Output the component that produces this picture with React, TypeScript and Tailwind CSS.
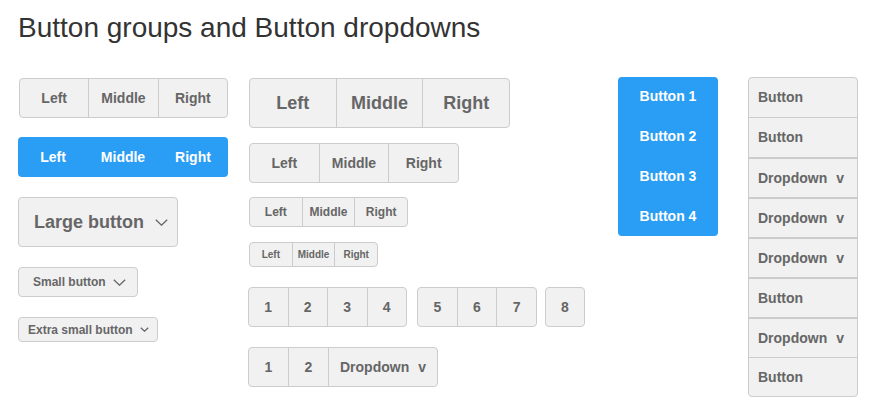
const btnBase = "flex items-center justify-center font-bold text-[#666]"

function Chevron({ w, h }: { w: number; h: number }) {
  return (
    <svg width={w} height={h} viewBox={`0 0 ${w} ${h}`} fill="none">
      <polyline points={`0.8,0.8 ${w / 2},${h - 0.8} ${w - 0.8},0.8`} stroke="#666" strokeWidth="1.3" />
    </svg>
  )
}

function Group({ labels, className, text }: { labels: string[]; className: string; text: string }) {
  return (
    <div className={`flex border border-[#ccc] rounded-[4px] bg-[#f1f1f1] overflow-hidden ${className}`}>
      {labels.map((l, i) => (
        <div key={l} className={`${btnBase} flex-1 ${text} ${i > 0 ? "border-l border-[#ccc]" : ""}`}>
          {l}
        </div>
      ))}
    </div>
  )
}

export default function App() {
  const vrows = [
    { t: "Button", dd: false, line: "" },
    { t: "Button", dd: false, line: "border-t" },
    { t: "Dropdown", dd: true, line: "border-t-2" },
    { t: "Dropdown", dd: true, line: "border-t-2" },
    { t: "Dropdown", dd: true, line: "border-t-2" },
    { t: "Button", dd: false, line: "border-t-2" },
    { t: "Dropdown", dd: true, line: "border-t-2" },
    { t: "Button", dd: false, line: "border-t" },
  ]

  return (
    <div className="min-h-screen bg-white pl-[18px] pt-[12px] font-['Liberation_Sans',Arial,sans-serif]">
      <h1 className="text-[28px] leading-[32px] text-[#333] font-normal">Button groups and Button dropdowns</h1>

      <div className="flex mt-[33px]">
        {/* column 1 */}
        <div className="w-[210px] flex flex-col items-start">
          <Group labels={["Left", "Middle", "Right"]} className="mt-px ml-px w-[209px] h-[40px]" text="text-[14px]" />
          <div className="mt-[19px] w-[210px] h-[40px] flex rounded-[4px] bg-[#2a9df4]">
            {["Left", "Middle", "Right"].map((l) => (
              <div key={l} className="flex-1 flex items-center justify-center font-bold text-[14px] text-white">
                {l}
              </div>
            ))}
          </div>
          <div className="mt-[20px] w-[160px] h-[50px] flex items-center gap-[11px] pl-[15px] border border-[#ccc] rounded-[4px] bg-[#f1f1f1]">
            <span className="font-bold text-[18px] text-[#666]">Large button</span>
            <Chevron w={13} h={7} />
          </div>
          <div className="mt-[20px] w-[120px] h-[30px] flex items-center gap-[7px] pl-[14px] border border-[#ccc] rounded-[4px] bg-[#f1f1f1]">
            <span className="font-bold text-[12px] text-[#666]">Small button</span>
            <Chevron w={13} h={7} />
          </div>
          <div className="mt-[20px] w-[140px] h-[25px] flex items-center gap-[7px] pl-[9px] border border-[#ccc] rounded-[4px] bg-[#f1f1f1]">
            <span className="font-bold text-[12px] text-[#666]">Extra small button</span>
            <Chevron w={9} h={5} />
          </div>
        </div>

        {/* column 2 */}
        <div className="ml-[20px] w-[336px] flex flex-col items-start">
          <Group labels={["Left", "Middle", "Right"]} className="mt-px ml-px w-[261px] h-[50px]" text="text-[18px]" />
          <Group labels={["Left", "Middle", "Right"]} className="mt-[15px] ml-px w-[210px] h-[40px]" text="text-[14px]" />
          <Group labels={["Left", "Middle", "Right"]} className="mt-[14px] ml-px w-[159px] h-[30px]" text="text-[12px]" />
          <Group labels={["Left", "Middle", "Right"]} className="mt-[15px] ml-px w-[129px] h-[25px]" text="text-[10px]" />
          <div className="mt-[20px] flex">
            <Group labels={["1", "2", "3", "4"]} className="w-[159px] h-[40px]" text="text-[14px]" />
            <Group labels={["5", "6", "7"]} className="ml-[10px] w-[120px] h-[40px]" text="text-[14px]" />
            <Group labels={["8"]} className="ml-[8px] w-[40px] h-[40px]" text="text-[14px]" />
          </div>
          <div className="mt-[20px] flex w-[190px] h-[40px] border border-[#ccc] rounded-[4px] bg-[#f1f1f1] overflow-hidden">
            <div className={`${btnBase} w-[39px] text-[14px]`}>1</div>
            <div className={`${btnBase} w-[40px] text-[14px] border-l border-[#ccc]`}>2</div>
            <div className={`${btnBase} flex-1 text-[14px] border-l border-[#ccc]`}>
              Dropdown<span className="ml-[9px]">v</span>
            </div>
          </div>
        </div>

        {/* column 3 */}
        <div className="ml-[34px] w-[100px] h-[159px] flex flex-col rounded-[4px] bg-[#2a9df4]">
          {["Button 1", "Button 2", "Button 3", "Button 4"].map((l) => (
            <div key={l} className="flex-1 flex items-center justify-center font-bold text-[14px] text-white">
              {l}
            </div>
          ))}
        </div>

        {/* column 4 */}
        <div className="ml-[30px] w-[110px] flex flex-col border border-[#ccc] rounded-[4px] bg-[#f1f1f1] overflow-hidden">
          {vrows.map((r, i) => (
            <div
              key={i}
              className={`flex items-center pl-[9px] font-bold text-[14px] text-[#666] border-[#ccc] ${r.line} ${i === 0 || i === 7 ? "h-[39px]" : "h-[40px]"}`}
            >
              {r.t}
              {r.dd && <span className="ml-[9px]">v</span>}
            </div>
          ))}
        </div>
      </div>
    </div>
  )
}
